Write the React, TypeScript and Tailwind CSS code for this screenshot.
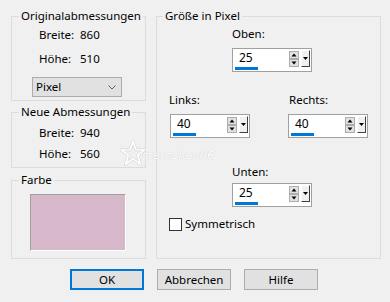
import React from "react";

const SpinArrows: React.FC = () => (
  <svg width="10" height="16" viewBox="0 0 10 16" className="block">
    <rect x="0.5" y="0.5" width="9" height="7" fill="#e1e1e1" stroke="#adadad" />
    <rect x="0.5" y="8.5" width="9" height="7" fill="#e1e1e1" stroke="#adadad" />
    <path d="M5 2.5 L7.5 5.5 L2.5 5.5 Z" fill="#000" />
    <path d="M2.5 10.5 L7.5 10.5 L5 13.5 Z" fill="#000" />
  </svg>
);

const SpinBox: React.FC<{ value: string }> = ({ value }) => (
  <div className="flex h-[24px] w-[80px] border border-[#a0a0a0] bg-white">
    <div className="flex flex-1 flex-col">
      <span className="pl-[6px] pt-[1px] text-[12px] leading-4">{value}</span>
      <div className="ml-[2px] mt-[1px] h-[3px] w-[23px] bg-[#0078d7]" />
    </div>
    <div className="mt-[2px]">
      <SpinArrows />
    </div>
    <div className="ml-[2px] mr-[1px] mt-[1px] flex h-[17px] w-[9px] items-center justify-center border border-b-[#404040] border-l-white border-r-[#404040] border-t-white bg-[#f0f0f0]">
      <svg width="5" height="3" viewBox="0 0 5 3" className="block">
        <path d="M0 0 L5 0 L2.5 3 Z" fill="#000" />
      </svg>
    </div>
  </div>
);

const InfoRow: React.FC<{ label: string; value: string }> = ({ label, value }) => (
  <div className="flex">
    <span className="w-[41px]">{label}</span>
    <span>{value}</span>
  </div>
);

const App: React.FC = () => {
  return (
    <div className="relative h-[302px] w-[390px] overflow-hidden bg-[#f0f0f0] pl-[11px] pt-[8px] font-['Noto_Sans',sans-serif] text-[11.5px] leading-4 text-black">
      <div className="flex items-start gap-[10px]">
        {/* left column */}
        <div className="flex w-[135px] flex-col">
          <fieldset className="border border-[#dcdcdc] pb-[3px]">
            <legend className="ml-[7px] px-[2px]">Originalabmessungen</legend>
            <div className="ml-[27px] mt-[3px] flex flex-col gap-[8px]">
              <InfoRow label="Breite:" value="860" />
              <InfoRow label="Höhe:" value="510" />
            </div>
            <div className="ml-[20px] mt-[10px] flex h-[20px] w-[90px] items-center justify-between border border-[#adadad] bg-[#e1e1e1] pl-[3px] pr-[5px]">
              <span>Pixel</span>
              <svg width="8" height="5" viewBox="0 0 8 5" className="block">
                <path d="M0.5 0.5 L4 4 L7.5 0.5" fill="none" stroke="#606060" strokeWidth="1" />
              </svg>
            </div>
          </fieldset>

          <fieldset className="mt-[3px] border border-[#dcdcdc] pb-[5px]">
            <legend className="ml-[7px] px-[2px]">Neue Abmessungen</legend>
            <div className="ml-[27px] mt-[5px] flex flex-col gap-[5px]">
              <InfoRow label="Breite:" value="940" />
              <InfoRow label="Höhe:" value="560" />
            </div>
          </fieldset>

          <fieldset className="mt-[4px] border border-[#dcdcdc] pb-[7px]">
            <legend className="ml-[7px] px-[2px]">Farbe</legend>
            <div className="ml-[18px] mt-[6px] h-[57px] w-[96px] border border-b-white border-l-[#a0a0a0] border-r-white border-t-[#a0a0a0] bg-[#d7b7ca]" />
          </fieldset>
        </div>

        {/* right column */}
        <fieldset className="h-[251px] w-[225px] border border-[#dcdcdc]">
          <legend className="ml-[6px] px-[2px]">Größe in Pixel</legend>
          <div className="flex flex-col">
            <div className="ml-[75px] mt-[2px] flex flex-col">
              <span>Oben:</span>
              <div className="mt-[6px]">
                <SpinBox value="25" />
              </div>
            </div>
            <div className="mt-[20px] flex">
              <div className="ml-[12px] flex flex-col">
                <span>Links:</span>
                <div className="ml-[1px] mt-[6px]">
                  <SpinBox value="40" />
                </div>
              </div>
              <div className="ml-[39px] flex flex-col">
                <span>Rechts:</span>
                <div className="ml-[-1px] mt-[6px]">
                  <SpinBox value="40" />
                </div>
              </div>
            </div>
            <div className="ml-[75px] mt-[26px] flex flex-col">
              <span>Unten:</span>
              <div className="mt-[3px]">
                <SpinBox value="25" />
              </div>
            </div>
            <label className="ml-[12px] mt-[9px] flex items-center gap-[3px]">
              <span className="h-[13px] w-[13px] border border-[#333333] bg-white" />
              <span>Symmetrisch</span>
            </label>
          </div>
        </fieldset>
      </div>

      {/* buttons */}
      <div className="ml-[59px] mt-[10px] flex gap-[13px]">
        <button className="h-[21px] w-[74px] border-2 border-[#0078d7] bg-[#e1e1e1] leading-4">OK</button>
        <button className="h-[21px] w-[74px] border border-[#adadad] bg-[#e1e1e1] leading-4">Abbrechen</button>
        <button className="h-[21px] w-[74px] border border-[#adadad] bg-[#e1e1e1] leading-4">Hilfe</button>
      </div>

      {/* watermark */}
      <div className="pointer-events-none absolute left-[120px] top-[140px] flex items-center">
        <svg width="26" height="26" viewBox="0 0 24 24" className="block">
          <path
            d="M12 1.5 L14.8 9 L22.5 9.2 L16.4 14 L18.6 22 L12 17.3 L5.4 22 L7.6 14 L1.5 9.2 L9.2 9 Z"
            fill="none"
            stroke="#d4d4d4"
            strokeWidth="2.6"
          />
          <path
            d="M12 1.5 L14.8 9 L22.5 9.2 L16.4 14 L18.6 22 L12 17.3 L5.4 22 L7.6 14 L1.5 9.2 L9.2 9 Z"
            fill="none"
            stroke="#ffffff"
            strokeWidth="1.6"
          />
        </svg>
        <span className="ml-[-4px] mt-[6px] font-['DejaVu_Sans',sans-serif] text-[11px] italic tracking-[0.3px] text-white [text-shadow:0_0_1px_#b8b8b8]">
          sternchen06
        </span>
      </div>
    </div>
  );
};

export default App;
